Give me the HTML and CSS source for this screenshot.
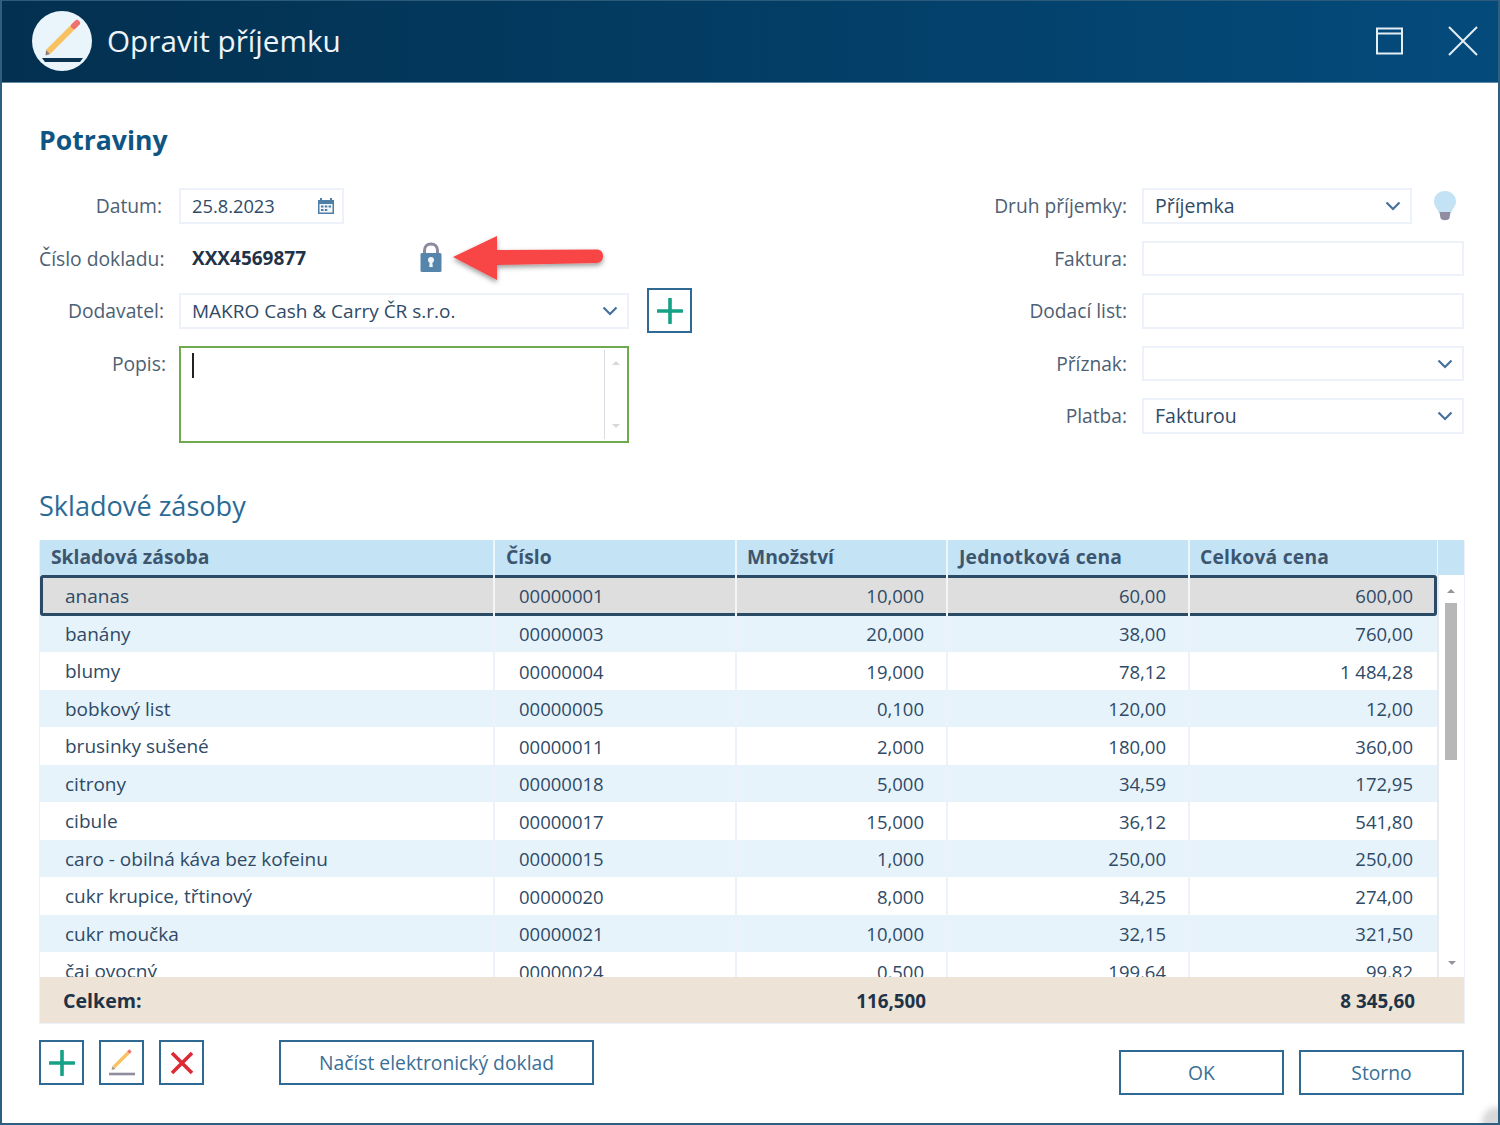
FILE: index.html
```html
<!DOCTYPE html>
<html lang="cs">
<head>
<meta charset="utf-8">
<title>Opravit příjemku</title>
<link rel="stylesheet" href="styles.css">
</head>
<body>
<div class="window">
  <header class="titlebar">
    <svg class="logo" width="62" height="62" viewBox="0 0 62 62">
      <circle cx="31" cy="31" r="30" fill="#eaf4fb"/>
      <path d="M17 42 L44 15" stroke="#f8c262" stroke-width="6"/>
      <path d="M43 16 L46 13" stroke="#ee7070" stroke-width="6" stroke-linecap="round"/>
      <path d="M14.500 45.500 L15 40 L19 44Z" fill="#8a7f70"/>
      <path d="M11 48 H52 L49 52 H14Z" fill="#0b3350"/>
    </svg>
    <h1 class="title">Opravit příjemku</h1>
    <div class="win-btns">
      <svg width="28" height="28" viewBox="0 0 28 28" fill="none" stroke="#e4eef5" stroke-width="2"><rect x="1" y="1.500" width="25" height="25"/><path d="M1 6.500H26"/></svg>
      <svg width="30" height="30" viewBox="0 0 30 30" fill="none" stroke="#e4eef5" stroke-width="2"><path d="M1 1L29 29M29 1L1 29"/></svg>
    </div>
  </header>

  <main class="content">
    <h2 class="group">Potraviny</h2>

    <section class="form">
      <div class="col-left">
        <div class="row">
          <label class="lbl lbl-date">Datum:</label>
          <div class="field date">25.8.2023
            <svg class="cal" width="18" height="18" viewBox="0 0 18 18"><path d="M1 3H17V17H1Z" fill="#4f7fa6"/><path d="M4 1V4M14 1V4" stroke="#4f7fa6" stroke-width="2"/><path d="M2.500 7H15.500V15.500H2.500Z" fill="#f3f7fa"/><path d="M4 8.500H6.500V10.500H4ZM7.800 8.500H10.300V10.500H7.800ZM11.600 8.500H14V10.500H11.600ZM4 12H6.500V14H4ZM7.800 12H10.300V14H7.800Z" fill="#4f7fa6"/></svg>
          </div>
        </div>
        <div class="row">
          <label class="lbl">Číslo dokladu:</label>
          <div class="docnum">XXX4569877</div>
          <svg class="lock" width="22" height="31" viewBox="0 0 22 31"><path d="M4.500 13V8.500C4.500 4.500 7 2 11 2S17.500 4.500 17.500 8.500V13" fill="none" stroke="#8b8a9c" stroke-width="3"/><rect x="0.500" y="11" width="21" height="19" rx="1.500" fill="#5585ab"/><circle cx="11" cy="18" r="3" fill="#eef4f8"/><path d="M9.800 19H12.200L12.800 25H9.200Z" fill="#eef4f8"/></svg>
        </div>
        <div class="row">
          <label class="lbl">Dodavatel:</label>
          <div class="field supplier">MAKRO Cash &amp; Carry ČR s.r.o.
            <svg class="chev" width="16" height="10" viewBox="0 0 16 10"><path d="M1.500 1.500L8 8L14.500 1.500" fill="none" stroke="#45719a" stroke-width="2.200"/></svg>
          </div>
          <button class="iconbtn add-supplier" type="button" aria-label="Přidat">
            <svg width="26" height="26" viewBox="0 0 26 26"><path d="M13 1V25M1 13H25" stroke="#16a085" stroke-width="3.600" stroke-linecap="round"/></svg>
          </button>
        </div>
        <div class="row row-top">
          <label class="lbl lbl-memo">Popis:</label>
          <div class="memo">
            <span class="caret"></span>
            <div class="memo-scroll"><i class="tri-up"></i><i class="tri-down"></i></div>
          </div>
        </div>
      </div>

      <div class="col-right">
        <div class="row">
          <label class="lbl-r">Druh příjemky:</label>
          <div class="field kind">Příjemka
            <svg class="chev" width="16" height="10" viewBox="0 0 16 10"><path d="M1.500 1.500L8 8L14.500 1.500" fill="none" stroke="#45719a" stroke-width="2.200"/></svg>
          </div>
          <svg class="bulb" width="26" height="32" viewBox="0 0 26 32"><path d="M13 1C6.500 1 2 5.500 2 11.500C2 16 5 18 7 23H19C21 18 24 16 24 11.500C24 5.500 19.500 1 13 1Z" fill="#c3e3f5"/><path d="M7.500 22H18.500L17.500 28C16.500 31 9.500 31 8.500 28Z" fill="#8f8d9f"/></svg>
        </div>
        <div class="row"><label class="lbl-r">Faktura:</label><div class="field wide"></div></div>
        <div class="row"><label class="lbl-r">Dodací list:</label><div class="field wide"></div></div>
        <div class="row"><label class="lbl-r">Příznak:</label><div class="field wide">
          <svg class="chev" width="16" height="10" viewBox="0 0 16 10"><path d="M1.500 1.500L8 8L14.500 1.500" fill="none" stroke="#45719a" stroke-width="2.200"/></svg>
        </div></div>
        <div class="row"><label class="lbl-r">Platba:</label><div class="field wide">Fakturou
          <svg class="chev" width="16" height="10" viewBox="0 0 16 10"><path d="M1.500 1.500L8 8L14.500 1.500" fill="none" stroke="#45719a" stroke-width="2.200"/></svg>
        </div></div>
      </div>
    </section>

    <h2 class="section">Skladové zásoby</h2>

    <section class="grid">
      <div class="g-head">
        <div class="g-row head">
          <div>Skladová zásoba</div><div>Číslo</div><div class="h-tight">Množství</div><div class="h-wide">Jednotková cena</div><div class="h-tight h-wide">Celková cena</div>
        </div>
        <div class="head-end"></div>
      </div>
      <div class="g-mid">
        <div class="g-body">
          <div class="g-row sel"><div>ananas</div><div>00000001</div><div>10,000</div><div>60,00</div><div>600,00</div></div>
          <div class="g-row alt"><div>banány</div><div>00000003</div><div>20,000</div><div>38,00</div><div>760,00</div></div>
          <div class="g-row"><div>blumy</div><div>00000004</div><div>19,000</div><div>78,12</div><div>1 484,28</div></div>
          <div class="g-row alt"><div>bobkový list</div><div>00000005</div><div>0,100</div><div>120,00</div><div>12,00</div></div>
          <div class="g-row"><div>brusinky sušené</div><div>00000011</div><div>2,000</div><div>180,00</div><div>360,00</div></div>
          <div class="g-row alt"><div>citrony</div><div>00000018</div><div>5,000</div><div>34,59</div><div>172,95</div></div>
          <div class="g-row"><div>cibule</div><div>00000017</div><div>15,000</div><div>36,12</div><div>541,80</div></div>
          <div class="g-row alt"><div>caro - obilná káva bez kofeinu</div><div>00000015</div><div>1,000</div><div>250,00</div><div>250,00</div></div>
          <div class="g-row"><div>cukr krupice, třtinový</div><div>00000020</div><div>8,000</div><div>34,25</div><div>274,00</div></div>
          <div class="g-row alt"><div>cukr moučka</div><div>00000021</div><div>10,000</div><div>32,15</div><div>321,50</div></div>
          <div class="g-row"><div>čaj ovocný</div><div>00000024</div><div>0,500</div><div>199,64</div><div>99,82</div></div>
        </div>
        <div class="g-scroll"><i class="tri-up"></i><span class="thumb"></span><i class="tri-down"></i></div>
      </div>
      <div class="g-total">
        <div class="total-lbl">Celkem:</div><div></div><div>116,500</div><div></div><div>8 345,60</div>
      </div>
    </section>

    <footer class="actions">
      <div class="tools">
        <button class="iconbtn" type="button" aria-label="Přidat">
          <svg width="26" height="26" viewBox="0 0 26 26"><path d="M13 1V25M1 13H25" stroke="#16a085" stroke-width="3.600" stroke-linecap="round"/></svg>
        </button>
        <button class="iconbtn" type="button" aria-label="Upravit">
          <svg width="28" height="30" viewBox="0 0 28 30"><path d="M6 19L21 4" stroke="#f8c262" stroke-width="3.400"/><path d="M20.500 4.500L22.500 2.500" stroke="#ee7070" stroke-width="3.400"/><path d="M3.500 22L4.500 18L7.500 21Z" fill="#a89a80"/><path d="M1 26H27" stroke="#8f8d9f" stroke-width="2.600"/></svg>
        </button>
        <button class="iconbtn" type="button" aria-label="Smazat">
          <svg width="24" height="24" viewBox="0 0 24 24"><path d="M2 2L22 22M22 2L2 22" stroke="#dc2a36" stroke-width="3.600"/></svg>
        </button>
        <button class="btn btn-load" type="button">Načíst elektronický doklad</button>
      </div>
      <div class="confirm">
        <button class="btn btn-main" type="button">OK</button>
        <button class="btn btn-main" type="button">Storno</button>
      </div>
    </footer>
  </main>

  <svg class="arrow" width="170" height="64" viewBox="0 0 170 64">
    <defs><filter id="sh" x="-10%" y="-20%" width="120%" height="150%"><feDropShadow dx="0" dy="2.500" stdDeviation="2.500" flood-color="#000" flood-opacity="0.4"/></filter></defs>
    <path d="M3 26L47 5V19L146 18.500C151 18.500 153 21 153 25C153 29 151 32 146 32L47 34V49Z" fill="#f84445" filter="url(#sh)"/>
  </svg>
  <span class="corner"></span>
</div>
</body>
</html>
```
FILE: styles.css
```css
* { box-sizing: border-box; }
html, body { margin: 0; padding: 0; background: #fff; }
body { font-family: "Open Sans", "Noto Sans", sans-serif; color: #2f4a66; }

.window {
  position: relative;
  width: 1500px;
  height: 1125px;
  overflow: hidden;
  background: #fff;
  border-left: 2px solid #2f5f80;
  border-right: 2px solid #2f5f80;
  border-bottom: 2px solid #2f5f80;
}

.titlebar {
  display: flex;
  align-items: center;
  height: 83px;
  margin: 0 -2px;
  padding: 0 22px 1px 31px;
  background: linear-gradient(90deg, #03304f 0%, #033a60 40%, #044b7c 100%);
  border-top: 1px solid #2c5a7a;
  border-bottom: 1px solid #5f8aa6;
}
.logo { flex: none; }
.title {
  margin: 0 0 0 14px;
  font-size: 29.700px;
  font-weight: 400;
  color: #eef4f8;
  line-height: 40px;
}
.win-btns { margin-left: auto; display: flex; align-items: center; gap: 44px; }
.win-btns svg { display: block; }

.content { padding: 0 34px 0 37px; }

.group {
  margin: 38px 0 0;
  height: 38px;
  font-size: 26.600px;
  line-height: 38px;
  font-weight: 700;
  color: #0f5583;
}

.form { display: flex; justify-content: space-between; margin-top: 29px; height: 255px; }
.col-left, .col-right { display: flex; flex-direction: column; gap: 17px; }
.row { display: flex; align-items: center; height: 35.500px; }
.row-top { align-items: flex-start; }

.lbl { width: 125px; text-align: right; font-size: 19.300px; color: #4d6074; white-space: nowrap; flex: none; }
.lbl-date { padding-right: 2px; }
.lbl-memo { width: 127px; padding-top: 4px; }
.lbl-r { width: 180px; margin-right: 15px; text-align: right; font-size: 19.200px; color: #4d6074; white-space: nowrap; flex: none; }

.field {
  position: relative;
  display: flex;
  align-items: center;
  height: 35.500px;
  padding: 0 11px;
  border: 2px solid #edf2fa;
  background: #fff;
  font-size: 19.500px;
  color: #2f4a66;
}
.date { width: 165px; margin-left: 15px; font-size: 18.300px; }
.supplier { width: 450px; margin-left: 15px; font-size: 19px; }
.kind { width: 270px; }
.wide { width: 322px; }
.cal { position: absolute; right: 7px; top: 7px; }
.chev { position: absolute; right: 9px; top: 11px; }
.docnum { margin-left: 28px; width: 228px; font-size: 19px; font-weight: 700; color: #1f3348; flex: none; }
.lock { flex: none; margin-top: -2px; }
.bulb { margin-left: 20px; flex: none; }

.iconbtn {
  display: flex;
  align-items: center;
  justify-content: center;
  flex: none;
  width: 45px;
  height: 45px;
  padding: 0;
  background: #fff;
  border: 2px solid #2f6a94;
  border-radius: 0;
}
.add-supplier { margin-left: 18px; }

.memo {
  position: relative;
  width: 450px;
  height: 97px;
  margin-left: 13px;
  border: 2px solid #6faa4f;
  background: #fff;
}
.caret { position: absolute; left: 11px; top: 5px; width: 2px; height: 25px; background: #222; }
.memo-scroll {
  position: absolute;
  top: 2px;
  right: 22px;
  bottom: 2px;
  width: 1px;
  background: #d9dde2;
}
.memo-scroll .tri-up { position: absolute; left: 8px; top: 11px; border-bottom-color: #d8d8d8; }
.memo-scroll .tri-down { position: absolute; left: 8px; bottom: 11px; border-top-color: #d8d8d8; }
.tri-up, .tri-down { display: block; width: 0; height: 0; border-left: 4px solid transparent; border-right: 4px solid transparent; }
.tri-up { border-bottom: 4px solid #8f959a; }
.tri-down { border-top: 4px solid #8f959a; }

.section {
  margin: 43px 0 0;
  height: 40px;
  line-height: 40px;
  font-size: 27.100px;
  font-weight: 400;
  color: #2c6a96;
}

.grid { margin-top: 14px; width: 1426px; border: 1px solid #edf2fa; border-top: 0; }
.g-head { display: flex; height: 35px; }
.g-row {
  display: grid;
  grid-template-columns: 455px 242px 211px 242px 247px;
  width: 1397px;
  height: 37.500px;
  flex: none;
  background: #fff;
}
.g-row > div {
  display: flex;
  align-items: center;
  justify-content: flex-end;
  padding-right: 22px;
  border-right: 2px solid #edf2fa;
  font-size: 18.500px;
  color: #2f4a66;
  white-space: nowrap;
}
.g-row > div:nth-child(1) { justify-content: flex-start; padding: 0 0 0 25px; font-size: 19px; }
.g-row > div:nth-child(2) { justify-content: flex-start; padding: 0 0 0 24px; }
.g-row > div:last-child { border-right: 0; padding-right: 24px; }

.g-row.head { height: 35px; background: #c4e3f5; }
.g-row.head > div {
  justify-content: flex-start;
  padding: 0 0 2px 11px;
  font-size: 19.300px;
  font-weight: 700;
  color: #3d5670;
  border-right-color: #edf6fb;
}
.g-row.head > .h-tight { padding-left: 10px; }
.g-row.head > .h-wide { letter-spacing: 0.2px; }
.head-end { flex: 1; height: 35px; background: #c4e3f5; border-left: 1px solid #edf6fb; }

.g-mid { display: flex; height: 402px; overflow: hidden; }
.g-body { width: 1397px; flex: none; }
.g-row.alt { background: #e6f3fb; }
.g-row.sel {
  height: 41px;
  margin-bottom: -1.250px;
  background: #dedede;
  box-shadow: inset 0 0 0 3px #2b4a66;
  border-radius: 3px;
  position: relative;
}
.g-row.sel > div { border-right-color: #f2f4f6; }

.g-scroll {
  flex: 1;
  position: relative;
  display: flex;
  flex-direction: column;
  align-items: center;
  border-left: 2px solid #e8ebf0;
  padding: 14px 2px 0 0;
}
.thumb { display: block; width: 12px; height: 157px; margin-top: 10px; background: #b7b7b7; }
.g-scroll .tri-down { position: absolute; bottom: 12px; left: 9px; }

.g-total {
  display: grid;
  grid-template-columns: 455px 242px 211px 242px 274px;
  height: 46px;
  padding-top: 1px;
  background: #ede3d6;
  font-size: 18.800px;
  font-weight: 700;
  color: #1f3348;
}
.g-total > div { display: flex; align-items: center; justify-content: flex-end; }
.g-total > .total-lbl { justify-content: flex-start; padding-left: 23px; font-size: 19.600px; }
.g-total > div:nth-child(3) { padding-right: 22px; }
.g-total > div:nth-child(5) { padding-right: 49px; }

.actions { display: flex; justify-content: space-between; align-items: flex-start; margin-top: 16px; width: 1425px; }
.tools { display: flex; gap: 15px; }
.btn {
  padding: 0;
  background: #fff;
  border: 2px solid #2f6a94;
  border-radius: 0;
  font-family: inherit;
  font-size: 19.300px;
  color: #3a6f97;
}
.btn-load { width: 315px; height: 45px; margin-left: 60px; }
.confirm { display: flex; gap: 15px; margin-top: 10px; }
.btn-main { width: 165px; height: 45px; }

.arrow { position: absolute; left: 448px; top: 231px; }
.corner {
  position: absolute;
  right: -14px;
  bottom: -14px;
  width: 30px;
  height: 30px;
  border-radius: 50%;
  background: #d8d8d8;
  filter: blur(3px);
}
```
